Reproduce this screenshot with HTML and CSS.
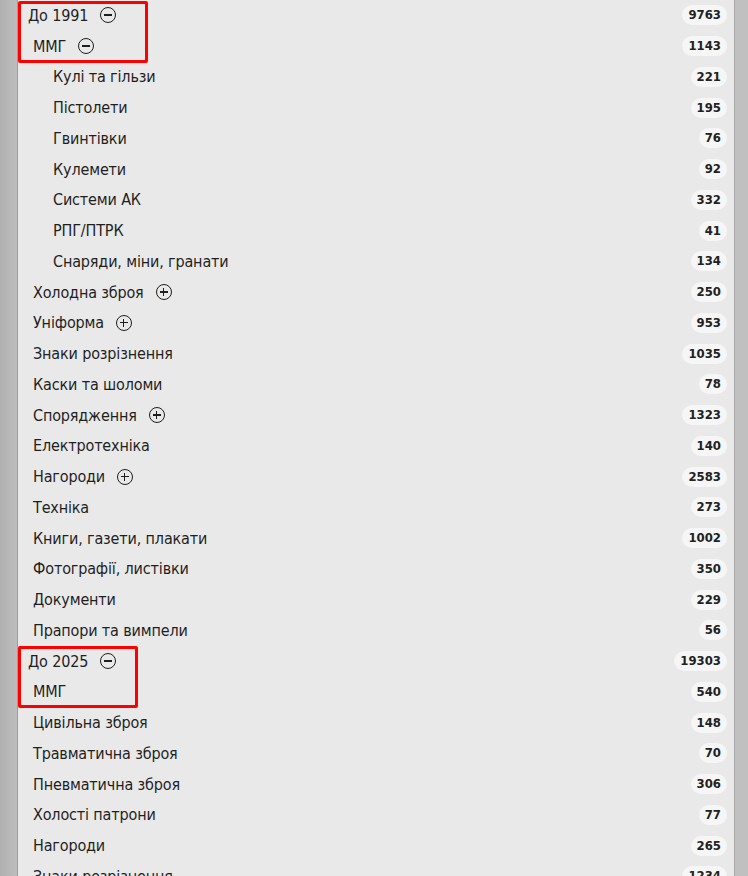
FILE: index.html
```html
<!DOCTYPE html>
<html lang="uk">
<head>
<meta charset="utf-8">
<title>Категорії</title>
<link rel="stylesheet" href="styles.css">
</head>
<body>
<div class="panel">
  <ul class="tree">
    <li class="row l1"><span class="name">До 1991</span><span class="tog minus"></span><span class="badge">9763</span></li>
    <li class="row l2"><span class="name">ММГ</span><span class="tog minus"></span><span class="badge">1143</span></li>
    <li class="row l3"><span class="name">Кулі та гільзи</span><span class="badge">221</span></li>
    <li class="row l3"><span class="name">Пістолети</span><span class="badge">195</span></li>
    <li class="row l3"><span class="name">Гвинтівки</span><span class="badge">76</span></li>
    <li class="row l3"><span class="name">Кулемети</span><span class="badge">92</span></li>
    <li class="row l3"><span class="name">Системи АК</span><span class="badge">332</span></li>
    <li class="row l3"><span class="name">РПГ/ПТРК</span><span class="badge">41</span></li>
    <li class="row l3"><span class="name">Снаряди, міни, гранати</span><span class="badge">134</span></li>
    <li class="row l2"><span class="name">Холодна зброя</span><span class="tog plus"></span><span class="badge">250</span></li>
    <li class="row l2"><span class="name">Уніформа</span><span class="tog plus"></span><span class="badge">953</span></li>
    <li class="row l2"><span class="name">Знаки розрізнення</span><span class="badge">1035</span></li>
    <li class="row l2"><span class="name">Каски та шоломи</span><span class="badge">78</span></li>
    <li class="row l2"><span class="name">Спорядження</span><span class="tog plus"></span><span class="badge">1323</span></li>
    <li class="row l2"><span class="name">Електротехніка</span><span class="badge">140</span></li>
    <li class="row l2"><span class="name">Нагороди</span><span class="tog plus"></span><span class="badge">2583</span></li>
    <li class="row l2"><span class="name">Техніка</span><span class="badge">273</span></li>
    <li class="row l2"><span class="name">Книги, газети, плакати</span><span class="badge">1002</span></li>
    <li class="row l2"><span class="name">Фотографії, листівки</span><span class="badge">350</span></li>
    <li class="row l2"><span class="name">Документи</span><span class="badge">229</span></li>
    <li class="row l2"><span class="name">Прапори та вимпели</span><span class="badge">56</span></li>
    <li class="row l1"><span class="name">До 2025</span><span class="tog minus"></span><span class="badge">19303</span></li>
    <li class="row l2"><span class="name">ММГ</span><span class="badge">540</span></li>
    <li class="row l2"><span class="name">Цивільна зброя</span><span class="badge">148</span></li>
    <li class="row l2"><span class="name">Травматична зброя</span><span class="badge">70</span></li>
    <li class="row l2"><span class="name">Пневматична зброя</span><span class="badge">306</span></li>
    <li class="row l2"><span class="name">Холості патрони</span><span class="badge">77</span></li>
    <li class="row l2"><span class="name">Нагороди</span><span class="badge">265</span></li>
    <li class="row l2"><span class="name">Знаки розрізнення</span><span class="badge">1234</span></li>
  </ul>
  <div class="mark mark-a"></div>
  <div class="mark mark-b"></div>
</div>
</body>
</html>
```
FILE: styles.css
```css
html, body {
  margin: 0;
  padding: 0;
  height: 100%;
  overflow: hidden;
}
body {
  background: linear-gradient(to right, #b0b0b0 0, #bdbdbd 17px, #c0c0c0 100%);
  font-family: "DejaVu Sans Condensed", "DejaVu Sans", sans-serif;
  color: #1f1f1f;
}
.panel {
  position: relative;
  margin-left: 17px;
  width: 716px;
  min-height: 100%;
  background: #e9e9e9;
  border-left: 1px solid #95a095;
  border-right: 1px solid #a9a9a9;
}
.tree {
  list-style: none;
  margin: 0;
  padding: 0;
}
.row {
  display: flex;
  align-items: center;
  height: 30.75px;
  padding-right: 7px;
  font-size: 16px;
}
.l1 { padding-left: 10px; }
.l2 { padding-left: 15px; }
.l3 { padding-left: 35px; }
.name {
  white-space: nowrap;
  letter-spacing: -0.15px;
}
.tog {
  box-sizing: border-box;
  width: 16px;
  height: 16px;
  border: 1.3px solid #1e1e1e;
  border-radius: 50%;
  margin-left: 12px;
  position: relative;
  flex: none;
}
.tog::before, .plus::after {
  content: "";
  position: absolute;
  background: #1e1e1e;
}
.tog::before {
  left: 3px;
  right: 3px;
  top: 6.1px;
  height: 1.3px;
}
.plus::after {
  top: 3px;
  bottom: 3px;
  left: 6.1px;
  width: 1.3px;
}
.badge {
  margin-left: auto;
  background: #f6f6f6;
  border-radius: 10px;
  padding: 2px 6px 3px;
  font-size: 13px;
  font-weight: bold;
  line-height: 15px;
  color: #222;
}
.mark {
  position: absolute;
  border: 3px solid #f00;
  border-radius: 2px;
}
.mark-a {
  left: 0;
  top: 1px;
  width: 124px;
  height: 56px;
}
.mark-b {
  left: 0;
  top: 646px;
  width: 114px;
  height: 56px;
}
```
